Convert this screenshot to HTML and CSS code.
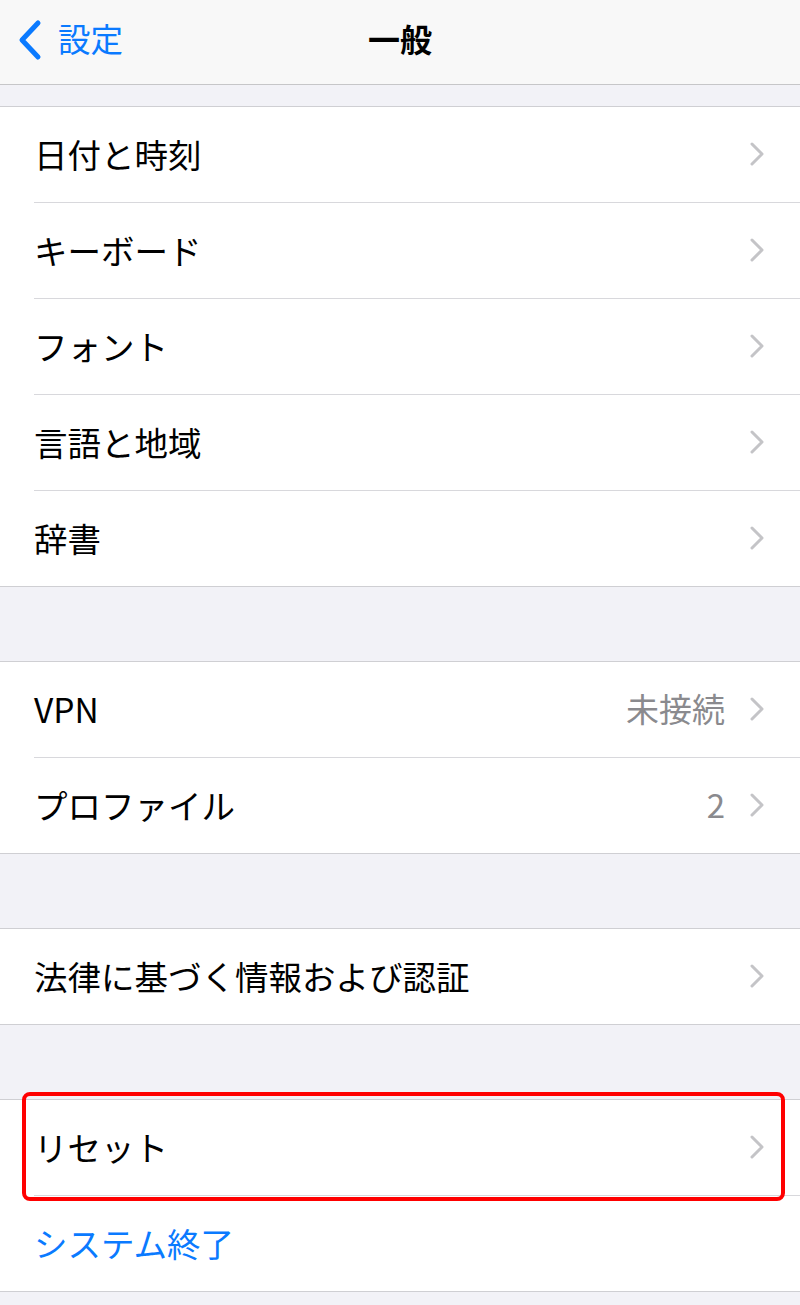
FILE: index.html
```html
<!DOCTYPE html>
<html lang="ja">
<head>
<meta charset="utf-8">
<link rel="stylesheet" href="styles.css">
</head>
<body>
<div class="page">
  <header class="nav">
    <div class="back">
      <svg class="back-icon" width="28" height="42" viewBox="0 0 28 42"><path d="M22 4 L6 21 L22 38" fill="none" stroke="#0a7aff" stroke-width="5" stroke-linecap="round" stroke-linejoin="round"/></svg>
      <span class="back-text">設定</span>
    </div>
    <div class="title">一般</div>
  </header>

  <section class="group first">
    <div class="row"><span class="label">日付と時刻</span><span class="chev"><svg width="16" height="26" viewBox="0 0 16 26"><path d="M3 3 L13 13 L3 23" fill="none" stroke="#c4c4c7" stroke-width="3" stroke-linecap="round" stroke-linejoin="round"/></svg></span></div>
    <div class="row"><span class="label">キーボード</span><span class="chev"><svg width="16" height="26" viewBox="0 0 16 26"><path d="M3 3 L13 13 L3 23" fill="none" stroke="#c4c4c7" stroke-width="3" stroke-linecap="round" stroke-linejoin="round"/></svg></span></div>
    <div class="row"><span class="label">フォント</span><span class="chev"><svg width="16" height="26" viewBox="0 0 16 26"><path d="M3 3 L13 13 L3 23" fill="none" stroke="#c4c4c7" stroke-width="3" stroke-linecap="round" stroke-linejoin="round"/></svg></span></div>
    <div class="row"><span class="label">言語と地域</span><span class="chev"><svg width="16" height="26" viewBox="0 0 16 26"><path d="M3 3 L13 13 L3 23" fill="none" stroke="#c4c4c7" stroke-width="3" stroke-linecap="round" stroke-linejoin="round"/></svg></span></div>
    <div class="row"><span class="label">辞書</span><span class="chev"><svg width="16" height="26" viewBox="0 0 16 26"><path d="M3 3 L13 13 L3 23" fill="none" stroke="#c4c4c7" stroke-width="3" stroke-linecap="round" stroke-linejoin="round"/></svg></span></div>
  </section>

  <section class="group">
    <div class="row"><span class="label">VPN</span><span class="value">未接続</span><span class="chev"><svg width="16" height="26" viewBox="0 0 16 26"><path d="M3 3 L13 13 L3 23" fill="none" stroke="#c4c4c7" stroke-width="3" stroke-linecap="round" stroke-linejoin="round"/></svg></span></div>
    <div class="row"><span class="label">プロファイル</span><span class="value">2</span><span class="chev"><svg width="16" height="26" viewBox="0 0 16 26"><path d="M3 3 L13 13 L3 23" fill="none" stroke="#c4c4c7" stroke-width="3" stroke-linecap="round" stroke-linejoin="round"/></svg></span></div>
  </section>

  <section class="group">
    <div class="row"><span class="label">法律に基づく情報および認証</span><span class="chev"><svg width="16" height="26" viewBox="0 0 16 26"><path d="M3 3 L13 13 L3 23" fill="none" stroke="#c4c4c7" stroke-width="3" stroke-linecap="round" stroke-linejoin="round"/></svg></span></div>
  </section>

  <section class="group last">
    <div class="row reset"><span class="label">リセット</span><span class="chev"><svg width="16" height="26" viewBox="0 0 16 26"><path d="M3 3 L13 13 L3 23" fill="none" stroke="#c4c4c7" stroke-width="3" stroke-linecap="round" stroke-linejoin="round"/></svg></span>
      <div class="highlight"></div>
    </div>
    <div class="row"><span class="label link">システム終了</span></div>
  </section>
</div>
</body>
</html>
```

FILE: styles.css
```css
html, body {
  margin: 0;
  padding: 0;
}
body {
  background: #f2f2f7;
  font-family: "Noto Sans CJK JP", "Noto Sans", sans-serif;
  color: #000;
}
.page {
  width: 800px;
}
.nav {
  height: 84px;
  background: #f8f8f8;
  border-bottom: 1px solid #c6c6c8;
  display: flex;
  align-items: center;
  justify-content: center;
  position: relative;
}
.back {
  position: absolute;
  left: 16px;
  top: 0;
  height: 84px;
  display: flex;
  align-items: center;
  gap: 14px;
  color: #0a7aff;
}
.back-icon {
  display: block;
  margin-top: -4px;
}
.back-text {
  font-size: 32.5px;
  line-height: 1;
  margin-top: -8px;
}
.title {
  font-size: 32px;
  font-weight: 700;
  line-height: 1;
  margin-top: -8px;
}
.group {
  background: #fff;
  border-top: 1px solid #cfcfd3;
  border-bottom: 1px solid #cfcfd3;
  margin-top: 74px;
}
.group.first {
  margin-top: 21px;
}
.row {
  height: 95px;
  margin-left: 34px;
  padding-right: 35px;
  display: flex;
  align-items: center;
  border-bottom: 1px solid #d8d8dc;
  position: relative;
}
.row:last-child {
  border-bottom: none;
}
.label {
  flex: 1;
  font-size: 33.5px;
  line-height: 1;
  margin-top: -2px;
}
.value {
  font-size: 33px;
  line-height: 1;
  color: #8a8a8e;
  margin-right: 24px;
  margin-top: -2px;
}
.chev {
  display: flex;
  align-items: center;
  margin-top: -2px;
}
.chev svg {
  display: block;
}
.link {
  color: #0a7aff;
}
.highlight {
  position: absolute;
  left: -12px;
  right: 15px;
  top: -8px;
  bottom: -6px;
  border: 4px solid #ff0000;
  border-radius: 8px;
  pointer-events: none;
}
```
